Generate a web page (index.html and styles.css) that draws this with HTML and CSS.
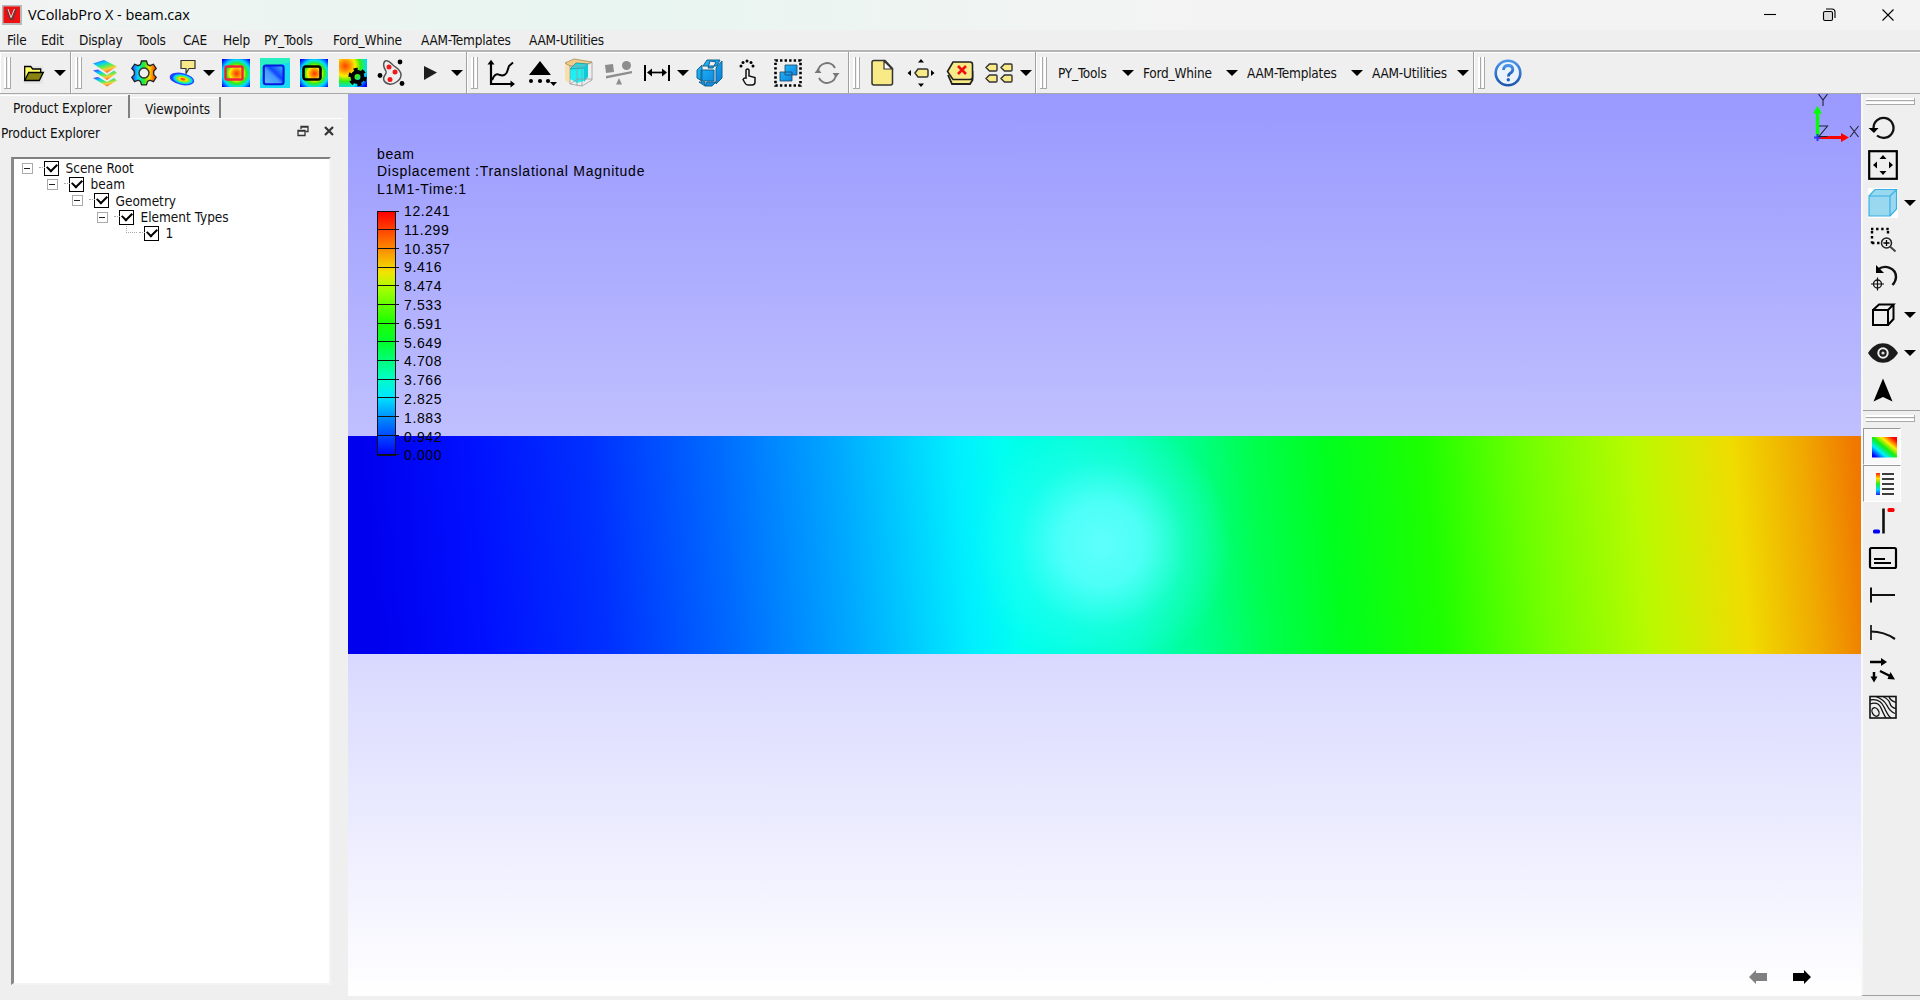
FILE: index.html
```html
<!DOCTYPE html>
<html lang="en">
<head>
<meta charset="utf-8">
<title>VCollabPro X - beam.cax</title>
<link rel="stylesheet" href="styles.css">
</head>
<body>
<svg width="0" height="0" class="defs">
  <defs>
    <linearGradient id="rain" x1="0" y1="0" x2="1" y2="0"><stop offset="0" stop-color="#33f"/><stop offset=".25" stop-color="#0df"/><stop offset=".5" stop-color="#2e2"/><stop offset=".72" stop-color="#fd0"/><stop offset="1" stop-color="#f20"/></linearGradient>
    <linearGradient id="rainv" x1="0" y1="0" x2="0" y2="1"><stop offset="0" stop-color="#f20"/><stop offset=".25" stop-color="#fd0"/><stop offset=".5" stop-color="#2e2"/><stop offset=".75" stop-color="#0df"/><stop offset="1" stop-color="#22f"/></linearGradient>
    <linearGradient id="raind" x1="0" y1="1" x2="1" y2="0"><stop offset=".08" stop-color="#00f"/><stop offset=".3" stop-color="#0ef"/><stop offset=".5" stop-color="#1e1"/><stop offset=".68" stop-color="#fe0"/><stop offset=".9" stop-color="#f00"/></linearGradient>
    <linearGradient id="sheet" x1=".2" y1="0" x2=".7" y2="1"><stop offset="0" stop-color="#44f"/><stop offset=".25" stop-color="#0cf"/><stop offset=".5" stop-color="#5e5"/><stop offset=".72" stop-color="#fc3"/><stop offset="1" stop-color="#f43"/></linearGradient>
    <radialGradient id="hot" cx=".52" cy=".52" r=".68"><stop offset="0" stop-color="#f30"/><stop offset=".18" stop-color="#f80"/><stop offset=".36" stop-color="#fe0"/><stop offset=".52" stop-color="#3e1"/><stop offset=".72" stop-color="#0df"/><stop offset="1" stop-color="#00f"/></radialGradient>
    <radialGradient id="hot2" cx=".22" cy=".25" r="1"><stop offset="0" stop-color="#f40"/><stop offset=".2" stop-color="#f90"/><stop offset=".36" stop-color="#fe0"/><stop offset=".55" stop-color="#3e1"/><stop offset=".78" stop-color="#0df"/><stop offset="1" stop-color="#00f"/></radialGradient>
    <linearGradient id="blue" x1="0" y1="0" x2="1" y2="1"><stop offset="0" stop-color="#25c2ff"/><stop offset="1" stop-color="#0878d8"/></linearGradient>
    <linearGradient id="cool" x1="0" y1="1" x2="1" y2="0"><stop offset="0" stop-color="#6bf"/><stop offset=".45" stop-color="#49f"/><stop offset=".6" stop-color="#14f"/><stop offset="1" stop-color="#4bf"/></linearGradient>
    <linearGradient id="help" x1="0" y1="0" x2="0" y2="1"><stop offset="0" stop-color="#4a94e8"/><stop offset="1" stop-color="#1c55b0"/></linearGradient>
  </defs>
</svg>

<header class="titlebar">
  <svg class="logo" viewBox="0 0 20 20"><path d="M0 0h20v20H0z" fill="#b9b9b9"/><path d="M1.500 1.500h16.500v16.500H1.500z" fill="#f01010"/><path d="M5 4l3.500 10h2L14 4" fill="none" stroke="#7b3434" stroke-width="2.400"/><path d="M6 4l3 8.500L12.500 4" fill="none" stroke="#ddd" stroke-width="1"/></svg>
  <span class="title">VCollabPro X - beam.cax</span>
  <div class="winbtns">
    <svg viewBox="0 0 14 14"><path d="M1 6.500h12" stroke="#000" stroke-width="1.100"/></svg>
    <svg viewBox="0 0 14 14"><path d="M4 1h6a3 3 0 0 1 3 3v6" fill="none" stroke="#000" stroke-width="1.100"/><rect x="1.500" y="3.500" width="9" height="9" rx="1.500" fill="#ddd" stroke="#000" stroke-width="1.100"/></svg>
    <svg viewBox="0 0 14 14"><path d="M1.500 1.500l11 11M12.500 1.500l-11 11" stroke="#000" stroke-width="1.100"/></svg>
  </div>
</header>

<nav class="menubar">
  <span>File</span><span>Edit</span><span>Display</span><span>Tools</span><span>CAE</span><span>Help</span><span>PY_Tools</span><span>Ford_Whine</span><span>AAM-Templates</span><span>AAM-Utilities</span>
</nav>

<div class="toolbars">
  <div class="bar w-file"><i class="grip"></i>
    <b class="slot"><svg viewBox="0 0 28 28"><path d="M4 7h19v18H4z" fill="#e6e6e6"/><path d="M4.700 21.500V7.500h6l2 2.500h8v3" fill="#ffff66" stroke="#000" stroke-width="1.300"/><path d="M4.700 21.500l4-8h14.600l-4 8z" fill="#8a8410" stroke="#000" stroke-width="1.300"/></svg></b>
    <b class="caret"></b>
  </div>
  <div class="bar w-cae"><i class="grip"></i>
    <b class="slot"><svg viewBox="0 0 28 28"><g fill="url(#sheet)"><path d="M2 19l5-1 9 5 7-4 3 2.500-10 6z"/><path d="M2 11.500l5-1 9 5.500 7-4.500 3 2.500-10 7z"/><path d="M2 4.500l11-3.500 13 6.500-10 6.500z"/></g></svg></b>
    <b class="slot"><svg viewBox="0 0 28 28"><path d="M11.500 2h5l1 3.500 2.500 1.200 3.400-1.500 2.800 4.200-2.500 2.800v3.400l2.500 2.800-2.800 4.200-3.500-1.400-2.400 1.200-1 3.500h-5l-1-3.500-2.400-1.200-3.500 1.400-2.800-4.200 2.500-2.800v-3.400L1.800 9.400l2.800-4.200L8 6.700l2.500-1.200z" fill="url(#rain)" stroke="#222" stroke-width="1.300"/><circle cx="14" cy="14" r="5" fill="#efefef" stroke="#333" stroke-width="1.500"/></svg></b>
    <b class="slot"><svg viewBox="0 0 28 28"><path d="M12 1.500h14v8h-6l-3 5v-5h-5z" fill="#f7e98a" stroke="#333" stroke-width="1.200"/><g transform="rotate(12 13 20)"><ellipse cx="13" cy="20" rx="12.500" ry="6" fill="#24f"/><ellipse cx="14" cy="20" rx="10" ry="4.600" fill="#0de"/><ellipse cx="14" cy="20" rx="7.500" ry="3.300" fill="#7e3"/><ellipse cx="14" cy="20" rx="5" ry="2.100" fill="#fd0"/><ellipse cx="14" cy="20" rx="2.600" ry="1.200" fill="#f50"/></g></svg></b>
    <b class="caret"></b>
    <b class="slot"><svg viewBox="0 0 28 28"><path d="M0 0h28v28H0z" fill="url(#hot)"/><rect x="3.500" y="7.500" width="17" height="13" rx="1.500" fill="none" stroke="#f0203c" stroke-width="2.400"/></svg></b>
    <b class="slot"><svg class="big" viewBox="0 0 28 28"><path d="M0 0h28v28H0z" fill="#18dcf4"/><path d="M0 0h28v4L6 9 0 20z" fill="#29f0c0"/><rect x="3.500" y="7" width="18.500" height="17.500" rx="2" fill="url(#cool)" stroke="#0018e0" stroke-width="2"/></svg></b>
    <b class="slot"><svg viewBox="0 0 28 28"><path d="M0 0h28v28H0z" fill="url(#hot)"/><rect x="3.500" y="7.500" width="17" height="13" rx="2.500" fill="none" stroke="#000" stroke-width="2.600"/></svg></b>
    <b class="slot"><svg viewBox="0 0 28 28"><path d="M0 0h28v28H0z" fill="url(#hot2)"/><circle cx="18.500" cy="18" r="5" fill="none" stroke="#000" stroke-width="4"/><circle cx="18.500" cy="18" r="7.500" fill="none" stroke="#000" stroke-width="3.500" stroke-dasharray="3.930 3.920"/></svg></b>
    <b class="slot"><svg viewBox="0 0 28 28"><path d="M7 2c4-2 6 3 9 5s7 4 7 9-7 10-12 9-7-5-4-9 0-4-1-8 0-5 1-6z" fill="#eee" stroke="#555" stroke-width="1.500"/><g fill="#f01818"><circle cx="11" cy="8" r="2.500"/><circle cx="17" cy="13" r="2.500"/><circle cx="12" cy="20.500" r="2.500"/></g><g fill="#000"><circle cx="22" cy="3" r="2.400"/><circle cx="2" cy="16.500" r="2.400"/><circle cx="24" cy="24.500" r="2.400"/></g></svg></b>
    <b class="slot"><svg viewBox="0 0 28 28"><path d="M7 7l13 6.500L7 21z" fill="#1d1d1d"/></svg></b>
    <b class="caret"></b>
  </div>
  <div class="bar w-tools"><i class="grip"></i>
    <b class="slot"><svg viewBox="0 0 28 28"><path d="M4 3v22h22" fill="none" stroke="#000" stroke-width="2.200"/><path d="M.5 5.500L4 .8l3.500 4.700zM23.500 21.500l4.500 3.500-4.500 3.500z"/><path d="M5 21c3-7 5-6 8-5s6 0 7-3l2-6 4-3.500" fill="none" stroke="#000" stroke-width="2"/></svg></b>
    <b class="slot"><svg viewBox="0 0 28 28"><path d="M14 2l11 14H3z"/><circle cx="5" cy="22" r="2"/><circle cx="14" cy="22" r="2.100"/><circle cx="22" cy="22" r="2.100"/><path d="M24 23h7l-3.500 4z"/></svg></b>
    <b class="slot"><svg viewBox="0 0 28 28"><path d="M0 4l5 3v18l-5-4z" fill="#f7dfae"/><path d="M0 4l9-4 18 3-8 4-14 0z" fill="#f0cc88" stroke="#a98a55" stroke-width=".8"/><path d="M5 10l14-1v13l-7 2-7-4z" fill="#1cf0f4"/><path d="M5 10l6-6 12 1-4 4z" fill="#20dcea" stroke="#089" stroke-width=".7"/><path d="M19 9l4-4v13l-4 5z" fill="#0fcbd8"/><path d="M5 7h14l8-4v18l-10 6-12-2zM12 27V7M17 27V8M5 25l8-5h14" fill="none" stroke="#9a9a9a" stroke-width=".8"/></svg></b>
    <b class="slot"><svg viewBox="0 0 28 28" fill="#8d8d8d"><path d="M1 6l8-1 1 8-8 1z"/><circle cx="22.500" cy="6.500" r="4.500"/><path d="M2 17l26-5v2.200L2 19.500zM15 19l3 6.500h-6z"/></svg></b>
    <b class="slot"><svg viewBox="0 0 28 28"><path d="M2 6v16M26 6v16" stroke="#000" stroke-width="2"/><path d="M6 13.500h16" stroke="#000" stroke-width="1.700"/><path d="M4 13.500l5-4v8zM24 13.500l-5-4v8z"/></svg></b>
    <b class="caret"></b>
    <b class="slot"><svg viewBox="0 0 28 28" stroke="#12638f" stroke-width="1"><path fill="url(#blue)" d="M7 7l4-6h13l-3 6zM20 9l6-7v17l-6 6zM1 11l5-5v16l-5-3zM5 11h13v11H5zM3 23h6v4zM11 23h9l-4 4h-7zM14 2l-2 7h5l3-6z"/></svg></b>
    <b class="slot"><svg viewBox="0 0 28 28"><g><circle cx="6" cy="7" r="1.500"/><circle cx="8" cy="3.500" r="1.500"/><circle cx="12" cy="2" r="1.500"/><circle cx="16" cy="3.500" r="1.500"/><circle cx="18" cy="7" r="1.500"/></g><path d="M11 19V11q1.500-2 3 0v6l6 1.500v4.500q0 3-3 3h-4q-2 0-3-2l-2-3.500q1-2 3-1.500z" fill="#f3f3f3" stroke="#111" stroke-width="1.500"/></svg></b>
    <b class="slot"><svg viewBox="0 0 28 28"><rect x="1.500" y="1.500" width="25" height="25" fill="none" stroke="#000" stroke-width="2.600" stroke-dasharray="2.400 2.145"/><path d="M11 6h12v10H11zM6 13h12v9H6z" fill="url(#blue)" stroke="#246" stroke-width=".8"/></svg></b>
    <b class="slot"><svg viewBox="0 0 28 28" fill="none" stroke="#777" stroke-width="2"><path d="M5 13a9 9 0 0 1 17-4M23 15a9 9 0 0 1-17 4"/><path d="M1.500 14l3.500-4.500L8.500 14zM19.500 14l3.500 4.500 3.500-4.500z" fill="#777" stroke="none"/></svg></b>
  </div>
  <div class="bar w-label"><i class="grip"></i>
    <b class="slot"><svg viewBox="0 0 28 28"><path d="M6 1.500h11l7.500 8V24q0 2-2 2H6q-2 0-2-2V3.500q0-2 2-2z" fill="#f8ea86" stroke="#333" stroke-width="1.500"/><path d="M16 2v8h8z" fill="#fff" stroke="#333" stroke-width="1.200"/></svg></b>
    <b class="slot"><svg viewBox="0 0 28 28"><path d="M8 14l3-4h8.500q1.500 0 1.500 1.500v5q0 1.500-1.500 1.500H11z" fill="#f8ea86" stroke="#333" stroke-width="1.500"/><path d="M14 0l3 3.500h-6zM14 28l3-3.500h-6zM.5 14L4 11v6zM27.500 14L24 11v6z"/></svg></b>
    <b class="slot"><svg viewBox="0 0 28 28"><path d="M2 16l4 9h18l2.500-4v-9" fill="#f8ea86" stroke="#222" stroke-width="1.800"/><path d="M1.500 12.500L7 3h17q2.500 0 2.500 2.500V18q0 2.500-2.500 2.500H7z" fill="#f8ea86" stroke="#222" stroke-width="1.600"/><path d="M12 7l8 8M20 7l-8 8" stroke="#f01010" stroke-width="2.600"/></svg></b>
    <b class="slot"><svg viewBox="0 0 28 28" fill="#f8ea86" stroke="#333" stroke-width="1.400"><path d="M1 8.500L4.500 5H11q1 0 1 1v5q0 1-1 1H4.500z"/><path d="M16 8.500L19.500 5H26q1 0 1 1v5q0 1-1 1h-6.500zM1 19.500L4.500 16H11q1 0 1 1v5q0 1-1 1H4.500zM16 19.500l3.500-3.500H26q1 0 1 1v5q0 1-1 1h-6.500z"/></svg></b>
    <b class="caret"></b>
  </div>
  <div class="bar w-menus"><i class="grip"></i>
    <span>PY_Tools</span><b class="caret"></b><span>Ford_Whine</span><b class="caret"></b><span>AAM-Templates</span><b class="caret"></b><span>AAM-Utilities</span><b class="caret"></b>
  </div>
  <div class="bar w-help"><i class="grip"></i>
    <b class="slot"><svg viewBox="0 0 28 28"><circle cx="14" cy="14" r="12.300" fill="#eaf3fd" stroke="url(#help)" stroke-width="2.600"/><path d="M9.500 11q.3-4.500 4.700-4.500t4.600 4q0 2.300-2.600 3.700-1.800 1-1.800 3.300" fill="none" stroke="url(#help)" stroke-width="2.800"/><circle cx="14.300" cy="20.800" r="1.700" fill="#2260b8"/></svg></b>
  </div>
</div>

<main class="main">
  <aside class="side">
    <div class="tabs"><span class="tab current">Product Explorer</span><span class="tab">Viewpoints</span></div>
    <div class="dock"><span>Product Explorer</span>
      <svg viewBox="0 0 12 12" fill="none" stroke="#333" stroke-width="1.300"><path d="M4 4V1.500h7v5H8.500M4 2.200h7"/><path d="M1 5.500h7v5H1zM1 6.200h7"/></svg>
      <svg viewBox="0 0 12 12"><path d="M2 2l8 8M10 2l-8 8" stroke="#333" stroke-width="2.200"/></svg>
    </div>
    <div class="tree">
      <div class="row d0"><i class="exp"></i><i class="chk"></i><span>Scene Root</span></div>
      <div class="row d1"><i class="exp"></i><i class="chk"></i><span>beam</span></div>
      <div class="row d2"><i class="exp"></i><i class="chk"></i><span>Geometry</span></div>
      <div class="row d3"><i class="exp"></i><i class="chk"></i><span>Element Types</span></div>
      <div class="row d4"><i class="leaf"></i><i class="chk"></i><span>1</span></div>
    </div>
  </aside>

  <section class="view">
    <div class="beam"></div>
    <div class="legend">
      <p class="l-name">beam</p><p class="l-res">Displacement :Translational Magnitude</p><p class="l-time">L1M1-Time:1</p>
      <div class="scale">
        <div class="ramp"><i></i><i></i><i></i><i></i><i></i><i></i><i></i><i></i><i></i><i></i><i></i><i></i><i></i></div>
        <div class="vals"><span>12.241</span><span>11.299</span><span>10.357</span><span>9.416</span><span>8.474</span><span>7.533</span><span>6.591</span><span>5.649</span><span>4.708</span><span>3.766</span><span>2.825</span><span>1.883</span><span>0.942</span><span>0.000</span></div>
      </div>
    </div>
    <svg class="triad" viewBox="0 0 50 50"><path d="M7.500 43V18" stroke="#0f0" stroke-width="3.400"/><path d="M3 19.500L7.500 12l4.500 7.500z" fill="#0f0"/><path d="M8 43.500h25" stroke="#f00" stroke-width="3"/><path d="M31 39l8 4.500-8 4.500z" fill="#f00"/><path d="M4 43.500h7M7.500 40v7" stroke="#33f" stroke-width="2"/><path d="M8.500 0l4.500 6 4.500-6M13 6v6M9 32h8.500L9 42.500h8.500M40 32l8.500 11M48.500 32L40 43" fill="none" stroke="#223" stroke-width="1.100"/></svg>
    <div class="nav">
      <svg viewBox="0 0 18 14"><path d="M0 7l7-7v3h11v8H7v3z" fill="#808080"/></svg>
      <svg viewBox="0 0 18 14"><path d="M18 7l-7-7v3H0v8h11v3z"/></svg>
    </div>
  </section>

  <aside class="right">
    <div class="vbar first"><i class="hgrip"></i>
      <div class="vs"><svg viewBox="0 0 30 30"><path d="M9 22.500A10 10 0 1 0 5.500 15" fill="none" stroke="#111" stroke-width="2.300"/><path d="M.5 15h10l-4.500 5z"/></svg></div>
      <div class="vs"><svg viewBox="0 0 30 30"><rect x="1.200" y="1.200" width="27.600" height="27.600" fill="none" stroke="#000" stroke-width="2.200"/><path d="M15 5l3.500 4h-7zM15 25l3.500-4h-7zM5 15l4-3.500v7zM25 15l-4-3.500v7z"/></svg></div>
      <div class="vs"><svg viewBox="0 0 30 30"><path d="M0 0h30v30H0z" fill="#fff"/><path d="M1 8l6-6.500h21.500V21L22 28H1z" fill="#99d8ee"/><path d="M1 8h21v20H1zM1 8l6-6.500h21.500L22 8M28.500 1.500V21L22 28" fill="none" stroke="#39b0e4" stroke-width="1.200"/></svg><b class="caret"></b></div>
      <div class="vs"><svg viewBox="0 0 30 30"><path d="M3 4h19M4 6v13M20 6v4M4 18h10" fill="none" stroke="#000" stroke-width="2.400" stroke-dasharray="2.400 2.700"/><circle cx="18.500" cy="18" r="5" fill="#eee" stroke="#222" stroke-width="1.500"/><path d="M22 21.500l5.500 5" stroke="#444" stroke-width="2"/><path d="M15.500 18h6M18.500 15v6" stroke="#000" stroke-width="1.300"/></svg></div>
      <div class="vs"><svg viewBox="0 0 30 30"><path d="M10 6.500C17 1 28 5 28 14q0 4-3.500 8" fill="none" stroke="#111" stroke-width="2.400"/><path d="M8 2v8h8z"/><circle cx="9.500" cy="21" r="4" fill="none" stroke="#111" stroke-width="1.300"/><path d="M3 21h13M9.500 14.500v13" stroke="#111" stroke-width="1.200"/></svg></div>
      <div class="vs"><svg viewBox="0 0 30 30"><path d="M5 10h15v15H5zM5 10l6-5.500h14.500L20 10M25.500 4.500V19L20 25" fill="none" stroke="#000" stroke-width="2"/></svg><b class="caret"></b></div>
      <div class="vs"><svg viewBox="0 0 30 30"><path d="M0 15C8 2 22 2 30 15 22 28 8 28 0 15z" fill="#1b1b1b"/><circle cx="15" cy="15" r="4.700" fill="#1b1b1b" stroke="#eee" stroke-width="2"/><circle cx="15" cy="15" r="1.600" fill="#ddd"/></svg><b class="caret"></b></div>
      <div class="vs"><svg viewBox="0 0 30 30"><path d="M15 3.500l9.500 23L15 22l-9.500 4.500z"/></svg></div>
    </div>
    <div class="vbar"><i class="hgrip"></i>
      <div class="vs"><span class="pressed"><svg viewBox="0 0 30 30"><path d="M3 5h25v20.500H3z" fill="url(#raind)"/></svg></span></div>
      <div class="vs"><span class="pressed"><svg viewBox="0 0 30 30"><path d="M7 4h4v22H7z" fill="url(#rainv)"/><path d="M13 5h12M13 10h12M13 15h12M13 20h12M13 25h12" stroke="#000" stroke-width="1.500"/></svg></span></div>
      <div class="vs"><svg viewBox="0 0 30 30"><path d="M15.500 2.500v25" stroke="#111" stroke-width="2.600"/><rect x="19.500" y="2" width="7" height="4" rx="1.500" fill="#f00"/><rect x="5" y="23.500" width="7" height="4" rx="1.500" fill="#00f"/></svg></div>
      <div class="vs"><svg viewBox="0 0 30 30"><rect x="2" y="5" width="26" height="20" rx="1.500" fill="none" stroke="#000" stroke-width="2.200"/><path d="M6 16h11M6 20h17" stroke="#000" stroke-width="2"/></svg></div>
      <div class="vs"><svg viewBox="0 0 30 30"><path d="M3 7.500v15M3 15h24" stroke="#111" stroke-width="2"/></svg></div>
      <div class="vs"><svg viewBox="0 0 30 30"><path d="M3 8v15" stroke="#111" stroke-width="1.700"/><path d="M3 14.500q13 0 24 7.500" fill="none" stroke="#111" stroke-width="2.200"/></svg></div>
      <div class="vs"><svg viewBox="0 0 30 30"><path d="M2 7h12M6 17v6M12 16l10 5" stroke="#000" stroke-width="2.500"/><path d="M13 3l6 4-6 4zM2.500 21.500h7L6 27.500zM22.500 17l4.500 7.500-7.500-.5z"/></svg></div>
      <div class="vs"><svg class="clip" viewBox="0 0 30 30"><g fill="none" stroke="#111" stroke-width="1.300"><rect x="2" y="4.500" width="26" height="21.500" stroke-width="1.600"/><ellipse cx="7.500" cy="20" rx="3.200" ry="4.500" transform="rotate(-30 7.500 20)"/><path d="M2 12q8-3 11 4t5 10M2 8q10-2 14 7t7 11M8 4.500q8 3 11 9t8 8M15 4.500q6 3 7 7t6 5M21 4.500q1 4 7 6"/></g></svg></div>
    </div>
  </aside>
</main>
</body>
</html>
```
FILE: styles.css
```css
* { box-sizing: border-box; }
body {
  margin: 0;
  width: 1920px;
  height: 1000px;
  overflow: hidden;
  background: #efefef;
  color: #111;
  font: 13.500px/16px "DejaVu Sans Condensed", "DejaVu Sans", sans-serif;
  display: flex;
  flex-direction: column;
}
svg { display: block; overflow: visible; }
.defs { flex: none; }
p { margin: 0; }

.titlebar {
  height: 30px;
  flex: none;
  display: flex;
  align-items: center;
  padding: 0 25px 1px 2px;
  background: linear-gradient(90deg, #f2f3f3 0, #eef4f2 150px, #e8f5f0 620px, #f0f4f2 1000px, #f3f3f3 1200px);
}
.logo { width: 20px; height: 20px; margin-right: 6px; }
.title { font: 14.5px/20px "Open Sans", "Noto Sans", sans-serif; letter-spacing: -.07px; color: #000; }
.winbtns { margin-left: auto; display: flex; gap: 45px; }
.winbtns svg { width: 14px; height: 14px; }

.menubar {
  height: 20px;
  flex: none;
  padding-left: 7px;
  display: grid;
  grid-template-columns: 34px 38px 58px 46px 40px 41px 69px 88px 108px 90px;
  line-height: 21px;
  letter-spacing: -.2px;
  white-space: nowrap;
}

.toolbars {
  height: 44px;
  flex: none;
  display: flex;
  border-top: 2px solid #b4b4b4;
  border-bottom: 1px solid #a8a8a8;
  box-shadow: inset 0 1px #fff;
}
.bar {
  display: flex;
  align-items: center;
  border-right: 1px solid #a0a0a0;
  box-shadow: inset 1px 1px #fff;
}
.w-file { width: 71px; }
.w-cae { width: 396px; }
.w-tools { width: 381.500px; }
.w-label { width: 187.500px; }
.w-menus {
  width: 438px;
  display: grid;
  grid-template-columns: 22px 63px 22px 81.500px 22.500px 103px 22px 84px 14px;
  letter-spacing: -.2px;
  white-space: nowrap;
}
.w-help { flex: 1; border-right: 0; }
.grip {
  flex: none;
  width: 7px;
  height: 32px;
  margin: 0 3px 0 4px;
  border: solid #a9a9a9;
  border-width: 0 1px 1px 0;
  background: linear-gradient(90deg, #fff 0 2px, #a9a9a9 2px 3px, #efefef 3px 4px, #fff 4px 6px);
}
.slot { flex: none; width: 39px; display: flex; justify-content: center; }
.slot svg { width: 28px; height: 28px; }
.slot svg.big { width: 30px; height: 30px; }
.caret { flex: none; width: 14px; display: flex; justify-content: center; }
.caret::before {
  content: "";
  border: 6px solid transparent;
  border-top: 6.500px solid #000;
  border-bottom: 0;
}

.main { flex: 1; display: flex; min-height: 0; }
.side { width: 348px; flex: none; display: flex; flex-direction: column; }
.tabs { height: 25px; flex: none; display: flex; margin-right: 5px; background: linear-gradient(#fff, #fff) 130px 24px / 100% 1px no-repeat; }
.tab { padding: 4px 0 0 15px; border-right: 2px solid #808080; height: 21px; margin-top: 3px; width: 91px; box-shadow: inset 0 1px #fff; letter-spacing: -.1px; white-space: nowrap; }
.tab.current { width: 130px; padding: 5px 0 0 13px; height: 23px; margin-top: 1px; }
.dock { height: 38px; flex: none; display: flex; padding: 5px 13px 0 1px; letter-spacing: -.1px; }
.dock span { flex: 1; line-height: 18px; }
.dock svg { width: 12px; height: 12px; margin: 1px 0 0 14px; }
.tree {
  width: 320px;
  height: 828px;
  margin-left: 11px;
  padding: 1px 0 0 7.500px;
  background: #fff;
  border: solid #808080;
  border-width: 2px 2px 2px 3px;
  border-color: #808080 #f4f4f4 #f4f4f4 #8a8a8a;
}
.row { height: 16.300px; display: flex; align-items: center; }
.d1 { padding-left: 25px; }
.d2 { padding-left: 50px; }
.d3 { padding-left: 75px; }
.d4 { padding-left: 100px; }
.exp {
  width: 11px;
  height: 11px;
  border: 1px solid #aaa;
  background: linear-gradient(#222, #222) center / 6px 1px no-repeat;
}
.leaf { width: 11px; height: 9px; margin-top: -9px; margin-left: 4px; margin-right: -4px; border: dotted #aaa; border-width: 0 0 1px 1px; }
.chk {
  width: 15px;
  height: 15px;
  margin: 0 7px 0 11px;
  border: 1.500px solid #000;
  background: #fff;
  position: relative;
}
.chk::before { content: ""; position: absolute; right: 100%; top: 5px; width: 6px; border-top: 1px dotted #aaa; }
.chk::after {
  content: "";
  position: absolute;
  left: 2.500px;
  top: 1px;
  width: 8px;
  height: 5px;
  border: solid #000;
  border-width: 0 0 2.200px 2.200px;
  transform: rotate(-45deg);
}

.view {
  width: 1513px;
  height: 902px;
  flex: none;
  position: relative;
  background: linear-gradient(#9999ff, #fff);
}
.beam {
  position: absolute;
  left: 0;
  top: 342px;
  width: 1513px;
  height: 218px;
  background:
    radial-gradient(ellipse 130px 130px at 754px 108px, rgba(100,255,255,.95) 0, rgba(90,255,255,.85) 32%, rgba(60,255,250,.35) 65%, transparent 100%),
    linear-gradient(85deg, #0000ee 2%, #0010ff 9%, #0030ff 17%, #0068ff 25%, #00a8ff 33%, #00f0ff 41%, #00fff0 44%, #00ffc0 51.500%, #00ff8c 56%, #00ff50 60%, #00ff1e 65%, #1eff00 71.500%, #70ff00 78%, #b8fa00 85%, #f0dc00 91.500%, #f0aa00 96%, #f07800 99.500%);
}
.legend {
  position: absolute;
  left: 29px;
  top: 51.500px;
  font: 14px/17.500px "Liberation Sans", Arial, sans-serif;
  color: #000;
  letter-spacing: .6px;
}
.legend p { white-space: nowrap; }
.l-res, .l-time { letter-spacing: .72px; }
.scale { display: flex; margin-top: 12.500px; height: 245px; }
.ramp {
  width: 19px;
  height: 245px;
  border: 1.500px solid #112;
  background: linear-gradient(#f00, #ff8000 14%, #f0e600 25%, #a0ff00 32%, #20ff00 45%, #00ff30 54%, #00ffc0 68%, #00e6ff 76%, #0080ff 86%, #0000ff);
  display: grid;
  grid-template-rows: repeat(13, 1fr);
}
.ramp i { width: 21px; border-bottom: 1px solid #111; }
.ramp i:first-child { border-top: 1px solid #111; margin-top: -1px; }
.vals { margin: -8.500px 0 0 8px; display: grid; grid-template-rows: repeat(14, 18.800px); line-height: 19px; }
.triad { position: absolute; left: 1462px; top: 0; width: 50px; height: 50px; clip-path: inset(0); }
.nav { position: absolute; left: 1401px; top: 876px; display: flex; gap: 26px; }
.nav svg { width: 18px; height: 14px; }

.right { width: 59px; height: 902px; border-left: 2px solid #f8f8f8; border-bottom: 1px solid #a0a0a0; }
.vbar.first { height: 317px; border-bottom: 1px solid #a0a0a0; margin-bottom: 1px; padding-top: 4px; }
.hgrip {
  display: block;
  height: 7px;
  width: 49px;
  margin: 4px 0 5.500px 3px;
  border: solid #a9a9a9;
  border-width: 0 1px 1px 0;
  background: linear-gradient(#fff 0 2px, #a9a9a9 2px 3px, #efefef 3px 4px, #fff 4px 6px);
}
.first .hgrip { margin-top: 0; margin-bottom: 4px; }
.vs { height: 37.250px; display: flex; align-items: center; }
.first .vs { height: 37.500px; }
.vs svg { width: 30px; height: 30px; margin-left: 4.500px; }
.vs svg.clip { overflow: hidden; }
.vs .caret { width: 12px; margin-left: 6px; }
.pressed {
  display: block;
  width: 38px;
  height: 37px;
  padding-top: 3px;
  border: 1px solid #fff;
  border-top-color: #999;
  border-left-color: #999;
  background: #f8f8f8;
}
```
